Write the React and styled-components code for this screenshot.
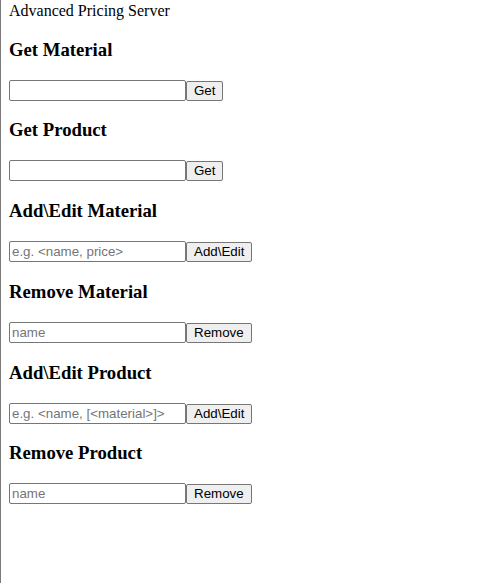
import styled, { createGlobalStyle } from 'styled-components';

const GlobalStyle = createGlobalStyle`
    html, body {
        height: 100%;
    }
    body {
        margin: 0;
        padding: 2px 0 0 8px;
        border-left: 1px solid #7a7a7a;
        box-sizing: border-box;
        font-family: "Liberation Serif", "Times New Roman", serif;
        font-size: 16px;
        color: #000;
        background: #fff;
    }
`;

const sections = [
    { title: 'Get Material', placeholder: '', action: 'Get' },
    { title: 'Get Product', placeholder: '', action: 'Get' },
    { title: 'Add\\Edit Material', placeholder: 'e.g. <name, price>', action: 'Add\\Edit' },
    { title: 'Remove Material', placeholder: 'name', action: 'Remove' },
    { title: 'Add\\Edit Product', placeholder: 'e.g. <name, [<material>]>', action: 'Add\\Edit' },
    { title: 'Remove Product', placeholder: 'name', action: 'Remove' },
];

const App = () => {
    return (
        <>
            <GlobalStyle />
            <Title>Advanced Pricing Server</Title>
            {sections.map((s) => (
                <Section key={s.title}>
                    <Heading>{s.title}</Heading>
                    <Row>
                        <Field type="text" placeholder={s.placeholder} />
                        <Button type="button">{s.action}</Button>
                    </Row>
                </Section>
            ))}
        </>
    );
};

const Title = styled.div`
    line-height: 18px;
`;

const Section = styled.section``;

const Heading = styled.h3`
    font-size: 18.72px;
    font-weight: bold;
    margin: 18.72px 0;
    line-height: 21.7px;
`;

const Row = styled.div`
    display: flex;
    align-items: flex-end;
    height: 21.6px;
`;

const Field = styled.input`
    box-sizing: border-box;
    width: 177px;
    height: 21px;
    margin: 0;
    padding: 1px 2px;
    border: 1px solid #767676;
    border-radius: 2px;
    font-family: "Liberation Sans", Arial, sans-serif;
    font-size: 13.333px;
    color: #000;
    background: #fff;

    &::placeholder {
        color: #757575;
    }
`;

const Button = styled.button`
    box-sizing: border-box;
    height: 20px;
    margin: 0;
    padding: 0 7px;
    border: 1px solid #767676;
    border-radius: 2px;
    background: #efefef;
    font-family: "Liberation Sans", Arial, sans-serif;
    font-size: 13.333px;
    color: #000;
    line-height: 18px;
`;

export default App;
